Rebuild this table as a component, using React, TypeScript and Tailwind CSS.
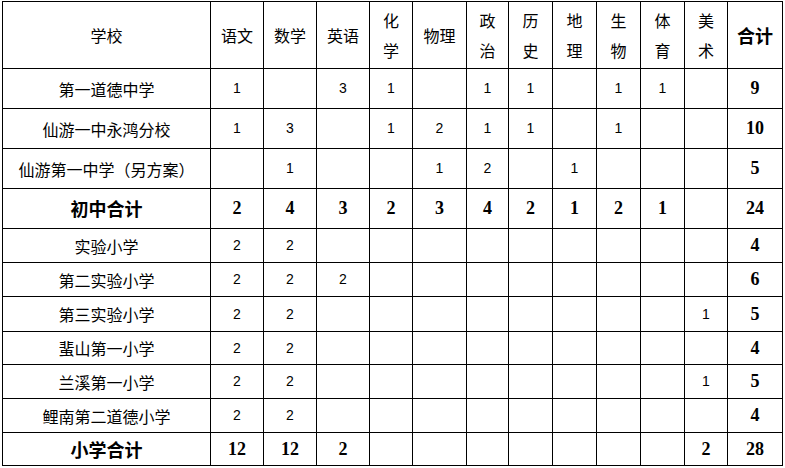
import React from "react";

type Row = { name: string; bold?: boolean; h: string; vals: (string | number)[] };

const rows: Row[] = [
  { name: "第一道德中学", h: "h-[40px]", vals: [1, "", 3, 1, "", 1, 1, "", 1, 1, "", 9] },
  { name: "仙游一中永鸿分校", h: "h-[40px]", vals: [1, 3, "", 1, 2, 1, 1, "", 1, "", "", 10] },
  { name: "仙游第一中学（另方案）", h: "h-[40px]", vals: ["", 1, "", "", 1, 2, "", 1, "", "", "", 5] },
  { name: "初中合计", bold: true, h: "h-[40px]", vals: [2, 4, 3, 2, 3, 4, 2, 1, 2, 1, "", 24] },
  { name: "实验小学", h: "h-[34px]", vals: [2, 2, "", "", "", "", "", "", "", "", "", 4] },
  { name: "第二实验小学", h: "h-[34px]", vals: [2, 2, 2, "", "", "", "", "", "", "", "", 6] },
  { name: "第三实验小学", h: "h-[35px]", vals: [2, 2, "", "", "", "", "", "", "", "", 1, 5] },
  { name: "蜚山第一小学", h: "h-[33px]", vals: [2, 2, "", "", "", "", "", "", "", "", "", 4] },
  { name: "兰溪第一小学", h: "h-[34px]", vals: [2, 2, "", "", "", "", "", "", "", "", 1, 5] },
  { name: "鲤南第二道德小学", h: "h-[34px]", vals: [2, 2, "", "", "", "", "", "", "", "", "", 4] },
  { name: "小学合计", bold: true, h: "h-[33px]", vals: [12, 12, 2, "", "", "", "", "", "", "", 2, 28] },
];

const widths = [
  "w-[208px]", "w-[53px]", "w-[53px]", "w-[53px]", "w-[43px]", "w-[54px]", "w-[42px]",
  "w-[44px]", "w-[44px]", "w-[44px]", "w-[44px]", "w-[43px]", "w-[55px]",
];

const cjk = "font-['Noto_Sans_CJK_SC',sans-serif]";
const serifB = "font-['Liberation_Serif','Noto_Sans_CJK_SC',serif] font-bold text-[18px]";
const num = "font-['Liberation_Sans',sans-serif] text-[14px]";

function Stack({ a, b }: { a: string; b: string }) {
  return (
    <div className="flex flex-col items-center leading-[30px]">
      <span>{a}</span>
      <span>{b}</span>
    </div>
  );
}

export default function App() {
  const td = "border border-black text-center align-middle p-0";
  return (
    <div className="bg-white w-[785px] h-[468px] pt-[1px] pl-[2px]">
      <table className={`table-fixed border-collapse w-[781px] text-black text-[16px] ${cjk}`}>
        <colgroup>
          {widths.map((w, i) => (
            <col key={i} className={w} />
          ))}
        </colgroup>
        <tbody>
          <tr>
            <td className={`${td} h-[67px]`}>学校</td>
            <td className={td}>语文</td>
            <td className={td}>数学</td>
            <td className={td}>英语</td>
            <td className={td}><Stack a="化" b="学" /></td>
            <td className={td}>物理</td>
            <td className={td}><Stack a="政" b="治" /></td>
            <td className={td}><Stack a="历" b="史" /></td>
            <td className={td}><Stack a="地" b="理" /></td>
            <td className={td}><Stack a="生" b="物" /></td>
            <td className={td}><Stack a="体" b="育" /></td>
            <td className={td}><Stack a="美" b="术" /></td>
            <td className={`${td} font-bold text-[18px]`}>合计</td>
          </tr>
          {rows.map((r, i) => (
            <tr key={i}>
              <td className={`${td} ${r.h} ${r.bold ? "font-bold text-[18px]" : ""}`}>{r.name}</td>
              {r.vals.map((v, j) => {
                const last = j === r.vals.length - 1;
                const cls = r.bold || last ? serifB : num;
                return (
                  <td key={j} className={`${td} ${cls}`}>
                    {v}
                  </td>
                );
              })}
            </tr>
          ))}
        </tbody>
      </table>
    </div>
  );
}
